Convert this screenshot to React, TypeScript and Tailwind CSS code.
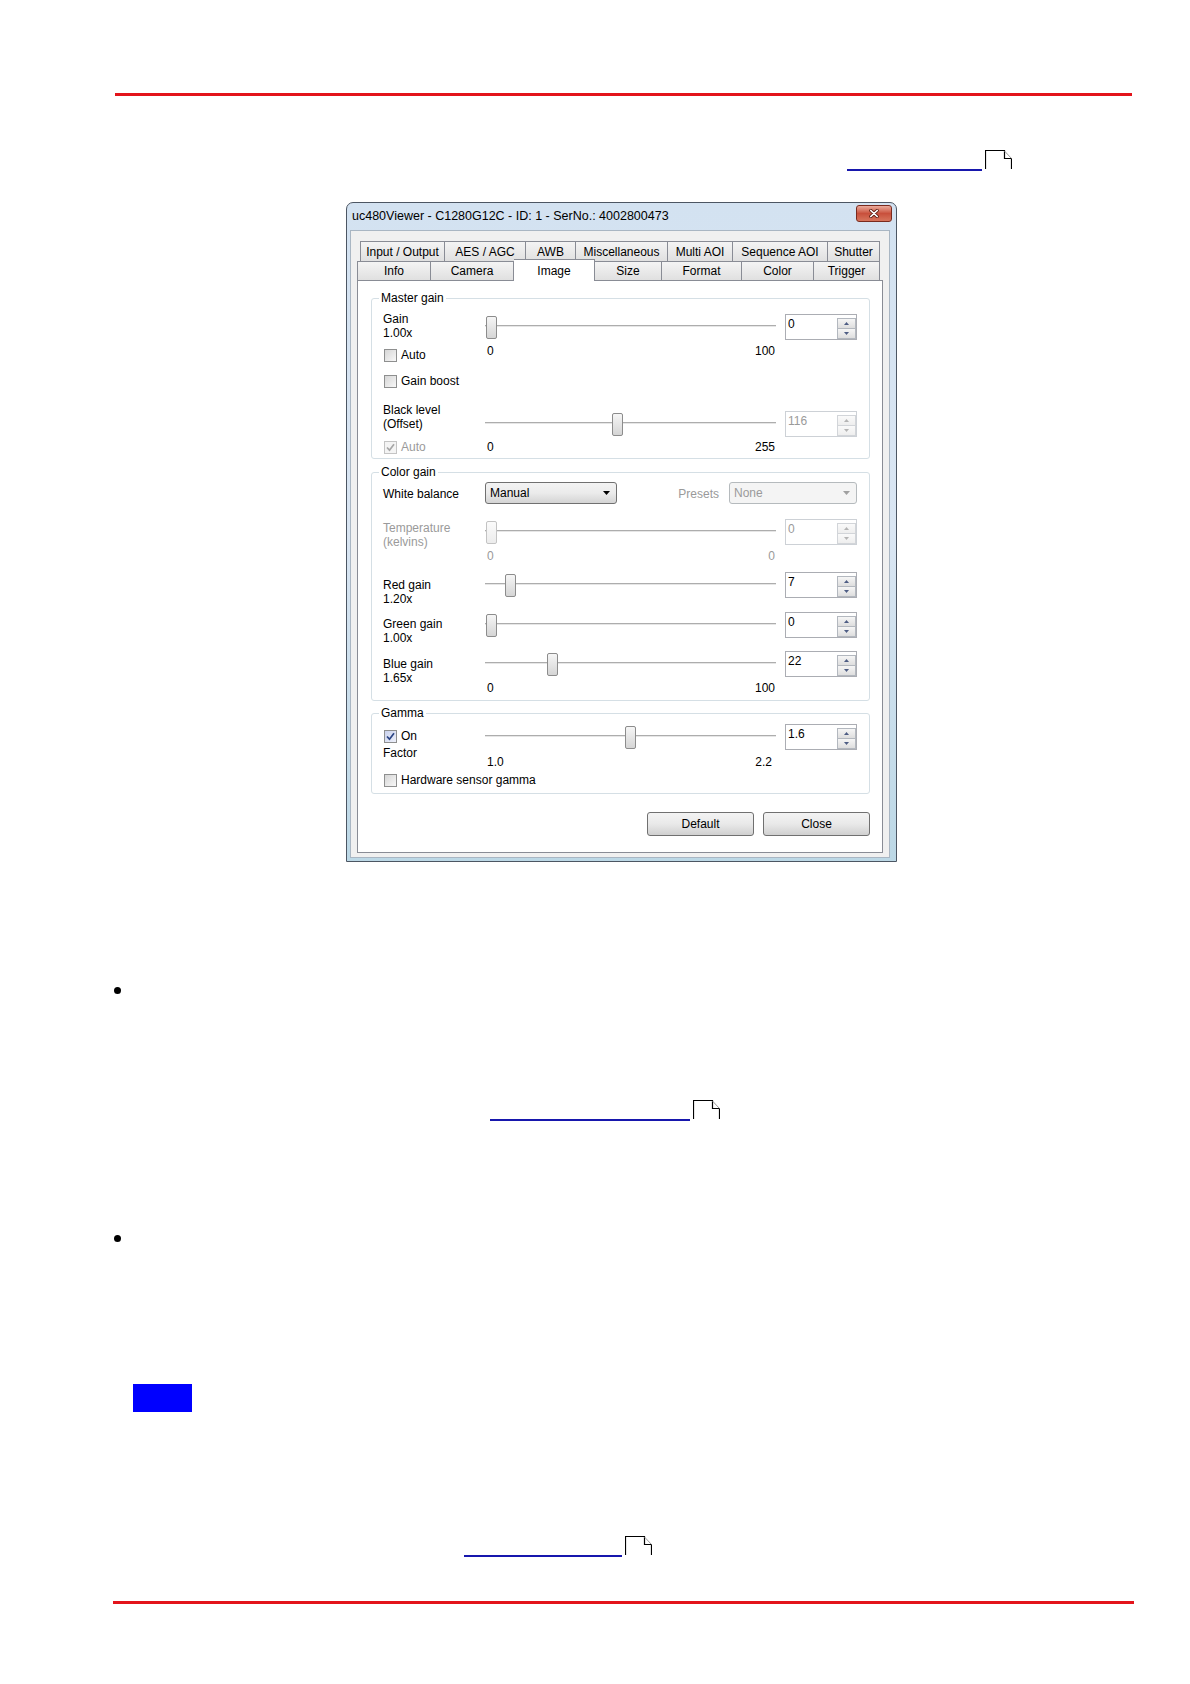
import React from "react";

function PageIcon() {
  return (
    <svg width="27" height="19" viewBox="0 0 27 19" className="block ml-[3px]">
      <path d="M0.5 19 V0.5 H19.5 V8.5 H26.5 V19" fill="none" stroke="#000" strokeWidth="1.2" />
      <path d="M19.5 1 L26.5 8.5" stroke="#9a9a9a" strokeWidth="1" />
    </svg>
  );
}

function DocLink({ lineClass }: { lineClass: string }) {
  return (
    <div className="flex items-start h-[21px]">
      <span className={`mt-[19px] h-[2px] bg-[#1717ad] ${lineClass}`} />
      <PageIcon />
    </div>
  );
}

function CheckMark({ color }: { color: string }) {
  return (
    <svg width="11" height="11" viewBox="0 0 11 11">
      <path d="M2 5.5 L4.5 8.2 L9 2.2" fill="none" stroke={color} strokeWidth="1.7" />
    </svg>
  );
}

function Check({ label, checked, disabled }: { label: string; checked?: boolean; disabled?: boolean }) {
  const box = disabled
    ? "border-[#c4c4c4] bg-[#f4f4f4]"
    : checked
      ? "border-[#8e8f8f] bg-gradient-to-br from-[#c9d1ec] to-[#eef1fb]"
      : "border-[#8e8f8f] bg-gradient-to-br from-[#d6d6d6] to-[#f8f8f8]";
  return (
    <div className="flex items-center gap-[4px] h-[14px] ml-[1px]">
      <span className={`w-[13px] h-[13px] border flex items-center justify-center ${box}`}>
        {checked && <CheckMark color={disabled ? "#a6a6a6" : "#2b4585"} />}
      </span>
      <span className={`whitespace-nowrap ${disabled ? "text-[#9a9a9a]" : ""}`}>{label}</span>
    </div>
  );
}

function Slider({ value, min, max, disabled }: { value: number; min: number; max: number; disabled?: boolean }) {
  const left = Math.round(1 + ((value - min) / (max - min)) * 278);
  return (
    <div className="relative h-[26px]">
      <div className="absolute left-0 right-0 top-[11px] h-[2px] bg-[#adadad] border-b border-[#e6e6e6]" />
      <div
        className={`absolute top-[2px] w-[11px] h-[23px] rounded-[2px] border bg-gradient-to-b ${
          disabled ? "border-[#c3c3c3] from-[#fbfbfb] to-[#ececec]" : "border-[#8c8c8c] from-[#f6f6f6] to-[#d5d5d5]"
        }`}
        style={{ left }}
      />
    </div>
  );
}

function Tri({ up, color }: { up?: boolean; color: string }) {
  return (
    <svg width="5" height="3" viewBox="0 0 5 3">
      <path d={up ? "M0 3 L2.5 0 L5 3 Z" : "M0 0 L5 0 L2.5 3 Z"} fill={color} />
    </svg>
  );
}

function Spin({ value, disabled }: { value: string; disabled?: boolean }) {
  const arrow = disabled ? "#b4b4b4" : "#4e5d84";
  const btn = disabled ? "border-[#d2d5d9] from-[#fafafa] to-[#eeeeee]" : "border-[#b3b8bf] from-[#f6f6f6] to-[#dedede]";
  return (
    <div
      className={`relative w-[72px] h-[26px] border bg-white ${
        disabled ? "border-[#cdd1d6] text-[#9a9a9a]" : "border-[#abadb3] text-black"
      }`}
    >
      <span className="absolute left-[2px] top-[2px] leading-[15px]">{value}</span>
      <div className="absolute right-0 top-[3px] w-[19px] flex flex-col">
        <div className={`h-[11px] border bg-gradient-to-b flex items-center justify-center ${btn}`}>
          <Tri up color={arrow} />
        </div>
        <div className={`h-[11px] -mt-px border bg-gradient-to-b flex items-center justify-center ${btn}`}>
          <Tri color={arrow} />
        </div>
      </div>
    </div>
  );
}

function Combo({ text, disabled, className }: { text: string; disabled?: boolean; className: string }) {
  return (
    <div
      className={`relative h-[22px] rounded-[3px] border flex items-center pl-[4px] ${
        disabled
          ? "border-[#b5babd] bg-[#f4f4f4] text-[#9a9a9a]"
          : "border-[#707070] bg-gradient-to-b from-[#f3f3f3] via-[#ebebeb] to-[#d4d4d4]"
      } ${className}`}
    >
      <span className="leading-[14px]">{text}</span>
      <svg className="absolute right-[6px] top-[8px]" width="7" height="4" viewBox="0 0 7 4">
        <path d="M0 0 H7 L3.5 4 Z" fill={disabled ? "#a0a0a0" : "#000"} />
      </svg>
    </div>
  );
}

function Scale({ min, max, gray, right }: { min: string; max: string; gray?: boolean; right?: string }) {
  return (
    <div
      className={`w-[291px] flex justify-between pl-[2px] leading-[14px] ${right ?? "pr-[1px]"} ${
        gray ? "text-[#9a9a9a]" : ""
      }`}
    >
      <span>{min}</span>
      <span>{max}</span>
    </div>
  );
}

function Group({ title, className, children }: { title: string; className: string; children: React.ReactNode }) {
  return (
    <div className={`relative border border-[#d5dfe5] rounded-[3px] pl-[11px] pr-[11px] ${className}`}>
      <span className="absolute -top-[8px] left-[7px] bg-white px-[2px] leading-[14px]">{title}</span>
      {children}
    </div>
  );
}

function Button({ label }: { label: string }) {
  return (
    <div className="w-[107px] h-[24px] rounded-[3px] border border-[#707070] bg-gradient-to-b from-[#f3f3f3] via-[#e9e9e9] to-[#d0d0d0] flex items-center justify-center">
      {label}
    </div>
  );
}

const row1: [string, string][] = [
  ["Input / Output", "w-[85px] border-l"],
  ["AES / AGC", "w-[81px]"],
  ["AWB", "w-[50px]"],
  ["Miscellaneous", "w-[92px]"],
  ["Multi AOI", "w-[65px]"],
  ["Sequence AOI", "w-[95px]"],
  ["Shutter", "w-[52px]"],
];

const row2: [string, string][] = [
  ["Info", "w-[74px] border-l"],
  ["Camera", "w-[83px]"],
  ["Image", "w-[81px]"],
  ["Size", "w-[67px]"],
  ["Format", "w-[80px]"],
  ["Color", "w-[72px]"],
  ["Trigger", "w-[66px]"],
];

function Tabs() {
  return (
    <div>
      <div className="flex ml-[3px] h-[20px]">
        {row1.map(([t, w]) => (
          <div
            key={t}
            className={`${w} h-[20px] border-t border-r border-[#898c95] bg-gradient-to-b from-[#f4f4f4] to-[#e0e0e0] flex items-center justify-center whitespace-nowrap`}
          >
            {t}
          </div>
        ))}
      </div>
      <div className="flex h-[19px] items-end">
        {row2.map(([t, w]) =>
          t === "Image" ? (
            <div
              key={t}
              className={`${w} h-[22px] -mb-px relative z-10 border-t border-r border-[#898c95] bg-white flex items-center justify-center`}
            >
              {t}
            </div>
          ) : (
            <div
              key={t}
              className={`${w} h-[19px] border-t border-r border-[#898c95] bg-gradient-to-b from-[#f4f4f4] to-[#e0e0e0] flex items-center justify-center`}
            >
              {t}
            </div>
          )
        )}
      </div>
    </div>
  );
}

function Panel() {
  return (
    <div className="w-[526px] h-[573px] border border-[#898c95] bg-white pl-[13px] pr-[12px] pt-[17px] flex flex-col">
      <Group title="Master gain" className="pb-[4px]">
        <div className="flex h-[30px] mt-[13px]">
          <div className="w-[102px] leading-[14px]">
            Gain
            <br />
            1.00x
          </div>
          <div className="w-[291px] mt-[2px]">
            <Slider value={0} min={0} max={100} />
          </div>
          <div className="ml-[9px] mt-[2px]">
            <Spin value="0" />
          </div>
        </div>
        <div className="flex h-[20px]">
          <div className="w-[102px] mt-[6px]">
            <Check label="Auto" />
          </div>
          <div className="mt-[2px]">
            <Scale min="0" max="100" />
          </div>
        </div>
        <div className="flex h-[41px]">
          <div className="mt-[12px]">
            <Check label="Gain boost" />
          </div>
        </div>
        <div className="flex h-[37px]">
          <div className="w-[102px] leading-[14px]">
            Black level
            <br />
            (Offset)
          </div>
          <div className="w-[291px] mt-[8px]">
            <Slider value={116} min={0} max={255} />
          </div>
          <div className="ml-[9px] mt-[8px]">
            <Spin value="116" disabled />
          </div>
        </div>
        <div className="flex h-[14px]">
          <div className="w-[102px]">
            <Check label="Auto" checked disabled />
          </div>
          <Scale min="0" max="255" />
        </div>
      </Group>

      <Group title="Color gain" className="mt-[13px] pb-[5px]">
        <div className="flex h-[22px] mt-[9px]">
          <div className="w-[102px] mt-[5px] leading-[14px]">White balance</div>
          <Combo text="Manual" className="w-[132px]" />
          <div className="flex-1 text-right pr-[10px] mt-[5px] leading-[14px] text-[#9a9a9a]">Presets</div>
          <Combo text="None" disabled className="w-[128px] mr-[1px]" />
        </div>
        <div className="flex h-[30px] mt-[15px]">
          <div className="w-[102px] mt-[2px] leading-[14px] text-[#9a9a9a]">
            Temperature
            <br />
            (kelvins)
          </div>
          <div className="w-[291px]">
            <Slider value={0} min={0} max={100} disabled />
          </div>
          <div className="ml-[9px]">
            <Spin value="0" disabled />
          </div>
        </div>
        <div className="flex h-[14px]">
          <div className="w-[102px]" />
          <Scale min="0" max="0" gray />
        </div>
        <div className="flex h-[40px] mt-[9px]">
          <div className="w-[102px] mt-[6px] leading-[14px]">
            Red gain
            <br />
            1.20x
          </div>
          <div className="w-[291px]">
            <Slider value={7} min={0} max={100} />
          </div>
          <div className="ml-[9px]">
            <Spin value="7" />
          </div>
        </div>
        <div className="flex h-[39px]">
          <div className="w-[102px] mt-[5px] leading-[14px]">
            Green gain
            <br />
            1.00x
          </div>
          <div className="w-[291px]">
            <Slider value={0} min={0} max={100} />
          </div>
          <div className="ml-[9px]">
            <Spin value="0" />
          </div>
        </div>
        <div className="flex h-[30px]">
          <div className="w-[102px] mt-[6px] leading-[14px]">
            Blue gain
            <br />
            1.65x
          </div>
          <div className="w-[291px]">
            <Slider value={22} min={0} max={100} />
          </div>
          <div className="ml-[9px]">
            <Spin value="22" />
          </div>
        </div>
        <div className="flex h-[14px]">
          <div className="w-[102px]" />
          <Scale min="0" max="100" />
        </div>
      </Group>

      <Group title="Gamma" className="mt-[12px] pb-[6px]">
        <div className="flex h-[31px] mt-[10px]">
          <div className="w-[102px]">
            <div className="mt-[5px]">
              <Check label="On" checked />
            </div>
            <div className="mt-[3px] leading-[14px]">Factor</div>
          </div>
          <div className="w-[291px]">
            <Slider value={1.6} min={1} max={2.2} />
          </div>
          <div className="ml-[9px]">
            <Spin value="1.6" />
          </div>
        </div>
        <div className="flex h-[14px]">
          <div className="w-[102px]" />
          <Scale min="1.0" max="2.2" right="pr-[4px]" />
        </div>
        <div className="mt-[4px]">
          <Check label="Hardware sensor gamma" />
        </div>
      </Group>

      <div className="flex justify-end gap-[9px] mt-[18px]">
        <Button label="Default" />
        <Button label="Close" />
      </div>
    </div>
  );
}

function Dialog() {
  return (
    <div className="ml-[346px] mt-[31px] w-[551px] h-[660px] flex flex-col rounded-t-[7px] border border-[#4c5663] bg-gradient-to-b from-[#d3e2f1] via-[#dae6f3] to-[#bcd8e6] text-[12px] leading-[14px] text-black font-['Liberation_Sans',Arial,sans-serif]">
      <div className="h-[27px] flex items-start justify-between pl-[5px] pr-[4px] shrink-0">
        <span className="mt-[6px] whitespace-nowrap text-[12.5px]">uc480Viewer - C1280G12C - ID: 1 - SerNo.: 4002800473</span>
        <div className="mt-[2px] w-[36px] h-[17px] rounded-[3px] border border-[#7a2a1e] bg-gradient-to-b from-[#eaaa9c] via-[#c8503c] to-[#d6745c] flex items-center justify-center">
          <svg width="10" height="9" viewBox="0 0 10 9">
            <path d="M1.8 1.5 L8.2 7.5 M8.2 1.5 L1.8 7.5" stroke="#5b1d12" strokeWidth="3.2" strokeLinecap="round" />
            <path d="M1.8 1.5 L8.2 7.5 M8.2 1.5 L1.8 7.5" stroke="#ffffff" strokeWidth="1.7" strokeLinecap="round" />
          </svg>
        </div>
      </div>
      <div className="flex-1 ml-[3px] mr-[6px] mb-[3px] border border-[#a9b6c3] bg-[#f0f0f0] pt-[10px] pl-[6px]">
        <Tabs />
        <Panel />
      </div>
    </div>
  );
}

export default function App() {
  return (
    <div className="w-[1190px] h-[1684px] bg-white flex flex-col items-start overflow-hidden">
      <div className="ml-[115px] mt-[93px] w-[1017px] h-[3px] bg-[#e3141b]" />
      <div className="ml-[847px] mt-[54px]">
        <DocLink lineClass="w-[135px]" />
      </div>
      <Dialog />
      <div className="ml-[114px] mt-[125px] w-[7px] h-[7px] rounded-full bg-black" />
      <div className="ml-[490px] mt-[106px]">
        <DocLink lineClass="w-[200px]" />
      </div>
      <div className="ml-[114px] mt-[114px] w-[7px] h-[7px] rounded-full bg-black" />
      <div className="ml-[133px] mt-[142px] w-[59px] h-[28px] bg-[#0000ff]" />
      <div className="ml-[464px] mt-[124px]">
        <DocLink lineClass="w-[158px]" />
      </div>
      <div className="ml-[113px] mt-[44px] w-[1021px] h-[3px] bg-[#e3141b]" />
    </div>
  );
}
